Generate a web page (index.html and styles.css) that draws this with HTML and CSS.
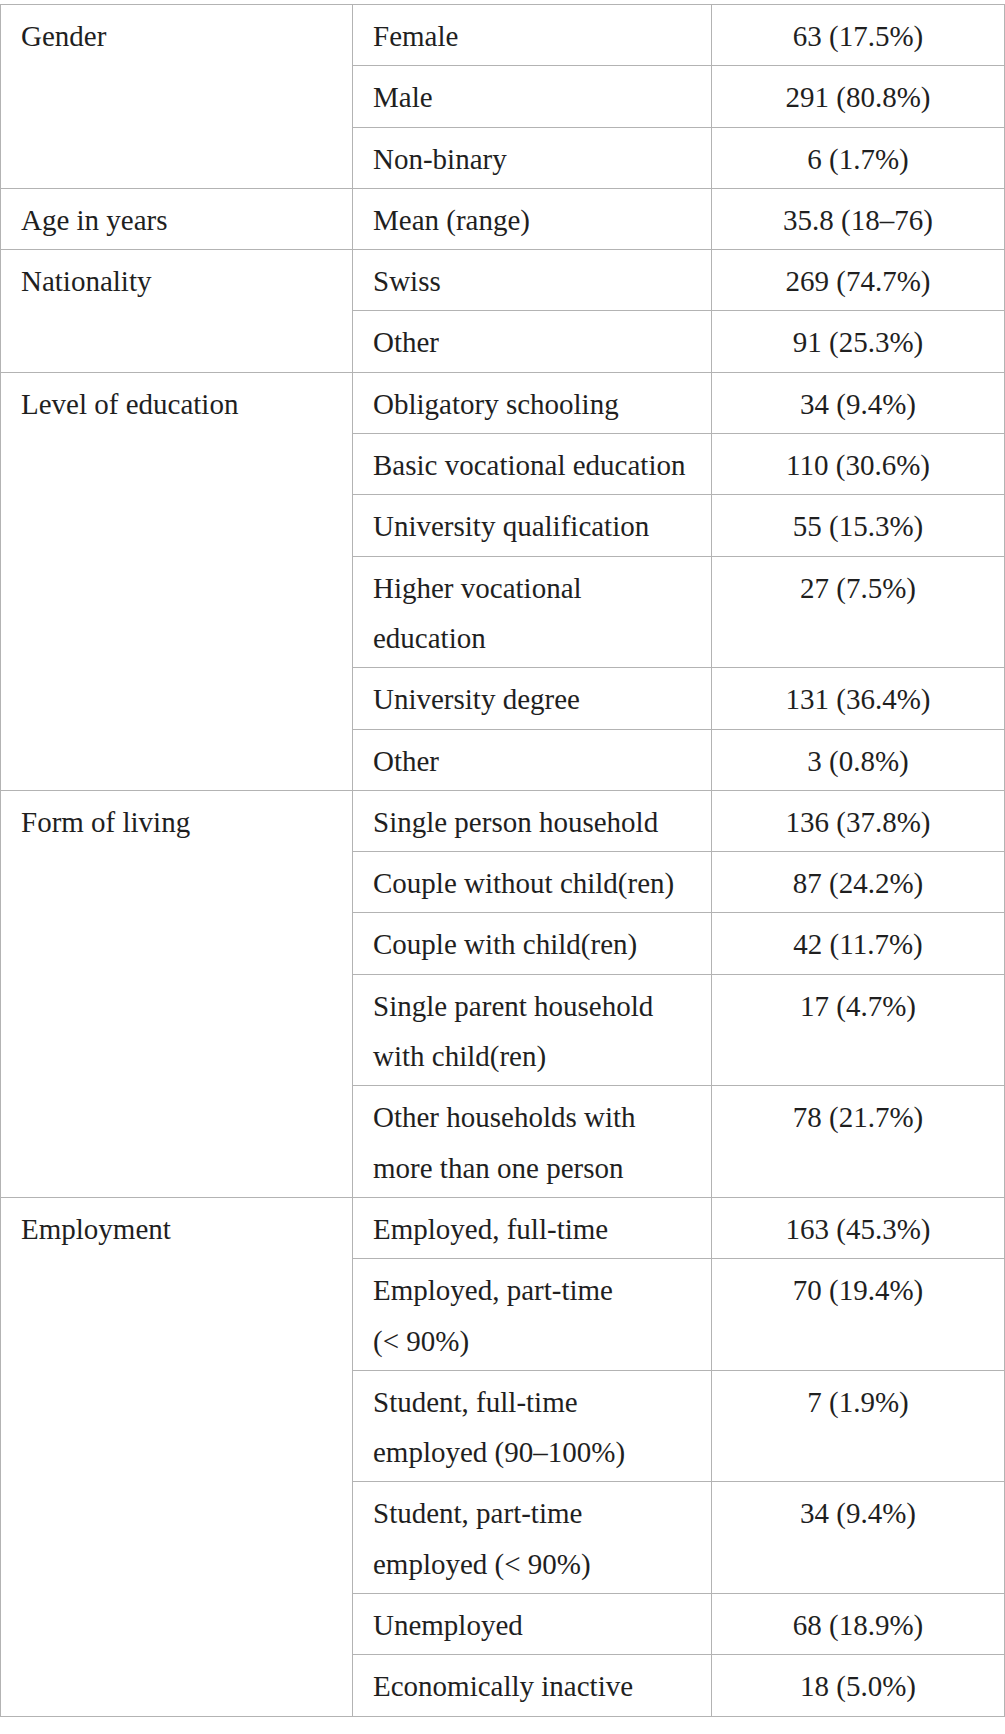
FILE: index.html
```html
<!DOCTYPE html>
<html lang="en">
<head>
  <meta charset="UTF-8" />
  <meta name="viewport" content="width=device-width, initial-scale=1.0" />
  <title>Sample characteristics</title>
  <link rel="stylesheet" href="styles.css">
</head>
<body>
  <table class="sample">
    <colgroup>
      <col class="col-var" />
      <col class="col-cat" />
      <col class="col-val" />
    </colgroup>
    <tbody>
      <tr><td rowspan="3">Gender</td><td>Female</td><td class="num">63 (17.5%)</td></tr>
      <tr><td>Male</td><td class="num">291 (80.8%)</td></tr>
      <tr><td>Non-binary</td><td class="num">6 (1.7%)</td></tr>

      <tr><td>Age in years</td><td>Mean (range)</td><td class="num">35.8 (18–76)</td></tr>

      <tr><td rowspan="2">Nationality</td><td>Swiss</td><td class="num">269 (74.7%)</td></tr>
      <tr><td>Other</td><td class="num">91 (25.3%)</td></tr>

      <tr><td rowspan="6">Level of education</td><td>Obligatory schooling</td><td class="num">34 (9.4%)</td></tr>
      <tr><td>Basic vocational education</td><td class="num">110 (30.6%)</td></tr>
      <tr><td>University qualification</td><td class="num">55 (15.3%)</td></tr>
      <tr><td>Higher vocational education</td><td class="num">27 (7.5%)</td></tr>
      <tr><td>University degree</td><td class="num">131 (36.4%)</td></tr>
      <tr><td>Other</td><td class="num">3 (0.8%)</td></tr>

      <tr><td rowspan="5">Form of living</td><td>Single person household</td><td class="num">136 (37.8%)</td></tr>
      <tr><td>Couple without child(ren)</td><td class="num">87 (24.2%)</td></tr>
      <tr><td>Couple with child(ren)</td><td class="num">42 (11.7%)</td></tr>
      <tr><td>Single parent household with child(ren)</td><td class="num">17 (4.7%)</td></tr>
      <tr><td>Other households with more than one person</td><td class="num">78 (21.7%)</td></tr>

      <tr><td rowspan="6">Employment</td><td>Employed, full-time</td><td class="num">163 (45.3%)</td></tr>
      <tr><td>Employed, part-time (&lt;&nbsp;90%)</td><td class="num">70 (19.4%)</td></tr>
      <tr><td>Student, full-time employed (90–100%)</td><td class="num">7 (1.9%)</td></tr>
      <tr><td>Student, part-time employed (&lt;&nbsp;90%)</td><td class="num">34 (9.4%)</td></tr>
      <tr><td>Unemployed</td><td class="num">68 (18.9%)</td></tr>
      <tr><td>Economically inactive</td><td class="num">18 (5.0%)</td></tr>
    </tbody>
  </table>
</body>
</html>
```

FILE: styles.css
```css
body { margin: 0; padding-top: 4px; background: #fff; color: #1f1f1f; font-family: "Liberation Serif", "Times New Roman", serif; }
.sample { width: 1004px; border-collapse: collapse; table-layout: fixed; font-size: 29px; line-height: 50.3px; }
.col-var { width: 352px; }
.col-cat { width: 359px; }
.col-val { width: 293px; }
.sample td { border: 1px solid #b3b3b3; padding: 6px 20px 4px; text-align: left; vertical-align: top; }
.sample td.num { text-align: center; }
```
